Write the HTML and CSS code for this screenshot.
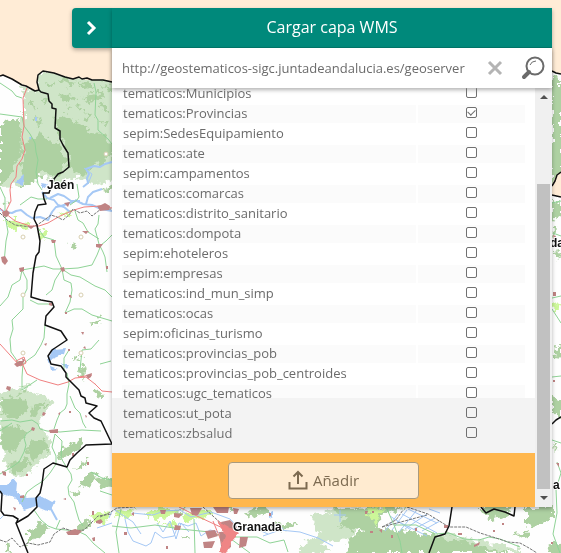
FILE: index.html
```html
<!DOCTYPE html>
<html lang="es">
<head>
<meta charset="utf-8">
<meta name="viewport" content="width=device-width, initial-scale=1">
<title>Cargar capa WMS</title>
<link rel="stylesheet" href="styles.css">
</head>
<body>
<svg class="map" viewBox="0 0 561 553" preserveAspectRatio="xMinYMin slice" aria-hidden="true">
  <defs>
    <filter id="rough" x="-5%" y="-5%" width="110%" height="110%">
      <feTurbulence type="fractalNoise" baseFrequency="0.16" numOctaves="3" seed="4"/>
      <feDisplacementMap in="SourceGraphic" scale="13" xChannelSelector="R" yChannelSelector="G"/>
    </filter>
    <filter id="wobble" x="-5%" y="-5%" width="110%" height="110%">
      <feTurbulence type="fractalNoise" baseFrequency="0.15" numOctaves="2" seed="9"/>
      <feDisplacementMap in="SourceGraphic" scale="4" xChannelSelector="R" yChannelSelector="G"/>
    </filter>
  </defs>
  <rect class="land" width="561" height="553"/>
  <!-- vegetation -->
  <g class="wood-light" filter="url(#rough)">
    <path d="M20 84L35 92L38 72L58 72L120 80V178L92 183L72 176L56 184L38 172L22 186L0 187V150L17 134L24 118L24 98Z"/>
    <path d="M0 394L10 390L26 386L40 396L55 402L44 414L38 424L52 442L49 455L36 466L24 478L8 471L3 450L0 440Z"/>
    <path d="M312 516L335 510L355 512L358 528L350 540L320 542L330 552L295 553L318 534Z"/>
    <path d="M424 536L452 534L480 541L520 549V553H420Z"/>
    <path d="M552 120L561 130V170L552 175Z"/>
  </g>
  <g class="wood" filter="url(#rough)">
    <path d="M0 124L20 118L22 150L10 176L0 186Z"/>
    <path d="M27 140L42 134L58 145L66 160L58 178L42 172L33 184L21 186L22 160Z"/>
    <path d="M55 118L64 115L80 124L90 133L104 134L112 142V158L96 164L84 176L70 168L68 150L60 138Z"/>
    <path d="M57 81L66 78L76 83L70 87ZM78 84L91 83L93 88L84 89ZM60 97L71 93L77 101L65 103ZM82 97L98 92L103 98L90 102ZM64 107L72 108L69 112ZM98 106L110 104L110 112L101 110ZM48 97L42 99L44 105ZM101 84L111 86L108 92ZM31 101L36 99L33 108ZM45 81L53 83L50 88ZM84 112L92 115L88 120ZM100 120L110 121L108 127ZM36 118L42 121L38 127ZM76 106L82 107L80 111Z"/>
    <path d="M0 401L12 396L25 400L28 409L16 420L4 415ZM31 406L47 402L41 411L30 416ZM2 429L18 424L27 433L18 448L6 452L0 444ZM29 442L46 438L48 449L34 460L26 453ZM8 465L23 458L31 463L17 474ZM21 387L27 391L18 395Z"/>
    <path d="M58 453L70 444L84 438L83 445L71 455L60 458ZM73 470L84 460L91 457L83 468ZM78 482L94 473L100 477L82 488ZM28 531L42 522L48 528L40 537L28 544ZM72 535L84 518L91 521L79 535ZM94 388L104 393L100 398Z"/>
    <path d="M80 368L86 366L83 382ZM97 480L112 477V488L100 487ZM70 494L80 490L78 497Z"/>
    <path d="M338 507L408 506L386 514L375 526L400 531L426 534L455 540L510 553H345L350 538L365 531L340 526L346 517L334 513ZM245 513L265 506L272 512L249 518ZM268 525L298 522L291 529L266 530ZM222 507L235 507L230 512Z"/>
    <path d="M479 507H512L505 517L490 520ZM526 507H554V516L535 527L526 522ZM515 534L528 530L526 538ZM548 547L561 540V553H546Z"/>
    <path d="M552 74L561 78V172L552 184ZM552 202L561 199V214L552 220ZM553 225L557 231L552 242ZM556 250L561 249L557 262ZM557 344L561 345V359L555 358ZM552 396L561 400V418L552 414ZM553 440L558 445L555 453Z"/>
    <path d="M4 202L10 199L9 205ZM68 245L77 242L74 250ZM103 190L112 185V193ZM75 356L81 357L78 362ZM3 543L11 546L8 552ZM91 322L100 318L98 327Z"/>
    <path d="M182 535L191 535L190 541ZM173 508L185 510L174 515Z"/>
  </g>
  <g class="meadow" filter="url(#rough)">
    <path d="M5 220L24 222L30 227L12 230ZM58 215L72 211L70 216ZM38 228L47 235L43 240ZM92 516L103 511L112 514L105 522L94 524Z"/>
    <path d="M112 512L135 509L124 519ZM145 513L163 507L178 511L154 521ZM181 514L205 508L215 514L187 522ZM160 525L174 521L178 527ZM365 509L386 507L375 524L371 516ZM552 302L561 307L553 313Z"/>
  </g>
  <!-- water -->
  <g class="lake" filter="url(#wobble)">
    <path d="M0 485L7 485L13 478L17 483L16 493L27 498L43 497L54 503L50 512L36 506L24 510L15 498L0 493Z"/>
    <path d="M16 182L24 175L23 185ZM40 183L48 184L43 190ZM53 349L66 348L64 354L52 359L50 366L58 369L51 370L48 358ZM29 137h3l-2 3ZM35 118h3v3h-3ZM269 512l4-1v6l-4 2ZM270 525L284 527L278 531ZM61 364l8 0l-3 5Z"/>
  </g>
  <g class="river">
    <path class="wide" d="M43 505L51 509L57 520M48 507L55 501M0 209L5 212L12 213L16 211L21 210L27 215L32 218L40 217L48 220L52 212L56 207L61 206L67 204L75 201M42 192L47 198L54 200L58 205L64 207L70 212M75 200L83 204L92 205L101 209L112 211M86 204L88 197L93 192L102 189M83 187L88 183L87 178L89 174L86 169L94 166L100 167L105 164L112 162M50 198L58 194L64 196L71 201L80 201"/>
    <path d="M84 168L92 174L88 184M97 528L112 523M125 519L128 532L133 541L146 546L151 543L155 532L163 538L174 536L179 523L188 526L196 523L201 536L210 530L218 532L229 540M132 513L153 515L164 511L180 510L191 517L211 512L230 519L240 530L252 527L268 534M157 523L163 532L170 521L176 539L181 523L189 532M115 510L133 522L141 534M263 536L280 530L300 532L318 538L333 546M340 510v12M334 515h12M0 519L4 515M109 518L112 511"/>
    <path d="M385 531L398 514M392 530L407 510M399 532L416 511M405 529L427 514M414 529L435 518M422 531L440 521M402 514L437 533M397 521L427 536M408 509L437 523M429 509L440 513M390 516L411 530"/>
  </g>
  <!-- roads -->
  <g class="road">
    <path d="M0 83L12 91L16 96L22 98M0 114L22 117L24 126L30 134L35 143L36 152L38 160L36 172L38 184L42 190M94 83L96 92L95 115L98 120L98 130L108 139L112 144M0 187L5 198L5 215L8 232L6 241L4 263M38 228L44 237L54 240L56 256L62 269L78 268L92 265L97 255L101 245L106 241L112 235M22 270L44 266L53 269L62 269L71 275L80 277L95 286L105 290L112 297M22 270L20 280L12 285L8 297L0 306M22 270L27 280L27 289L23 297L23 309L12 320L13 329L10 339L11 352L18 362M62 269L64 280L71 283L72 290L70 302L65 313L74 309L82 309L92 315L112 321M30 300L38 304L48 304L53 305M45 325L44 338L41 345L35 355L28 360L21 366M62 269L55 280L52 290L46 295M75 211L78 220L83 223L88 232L99 239M99 215L98 224L95 229L99 244L103 252L105 257L107 272M20 205L31 197L38 199L47 199M70 205L77 200L79 197L77 184M99 340L91 349L82 350L80 370"/>
    <path d="M0 421L12 420L20 422L32 420L38 424L40 429L47 431L60 432L82 430L101 431M54 429L57 420L60 413L65 409L67 404L67 394L69 384L67 373M70 396L75 408L80 413L83 423L86 428M33 429L26 434L24 438L26 445L24 452L19 462L12 467L0 474M55 434L52 447L56 456L56 464L50 473L43 481L35 486L27 492L22 502M55 434L62 441L61 458L67 468L71 474L72 480L68 487L69 495L74 502L76 510L79 520L83 526M23 363L22 377L22 390L31 384L37 380M34 510L41 520L48 526L56 529L60 520M56 529L77 531L86 535L94 544L105 553M112 480L102 478L91 472M112 495L100 491M64 371L64 358L69 350M100 364L111 361M0 431L12 423"/>
    <path d="M121 509L116 532L119 553M112 526L131 528L155 525L180 529L210 532M194 519L195 553M235 537L257 537L270 543L284 540L288 552M210 532L231 539L250 553M387 509L394 525L400 541L402 553M394 525L416 525L435 534L449 533L464 539L479 540L489 537L500 539L520 547M552 203L561 201M552 298L561 296M552 377L561 376M557 462L561 473L556 489L557 513L553 534L560 553M553 233L561 236M552 309L561 323M552 440L561 443"/>
  </g>
  <g class="motorway">
    <path d="M27 88L23 98L24 126L22 137L25 150L22 159L17 166L16 177L11 184L10 190L11 201L5 213L15 221L30 226L39 226L48 223L60 216L74 210L84 207L101 206L112 208M0 344L10 355L20 366L26 363L24 357L16 361L20 366M22 363L27 374L40 380L58 385L68 382L75 378L86 377L95 384L102 391L112 392M78 377L92 375M179 507L199 517L227 530L222 553M213 521L222 543M227 530L236 537M5 213L0 208"/>
  </g>
  <g class="rail">
    <path d="M0 213L7 220L15 225L31 227L37 225L43 221L51 215L57 217L63 220L69 215L73 209L80 213L87 211L92 216L101 209L112 209M0 540L6 542L12 538L20 547L28 543L38 545L50 542L54 534L63 528L72 531L84 530L91 523L98 516L112 514M100 517L109 513L117 508L135 507M203 507L214 517L224 526M382 527L396 520L403 510M382 527L427 515M407 507L428 514L449 527L466 527L480 533L496 538L508 542L520 543L529 548L537 553"/>
  </g>
  <!-- towns -->
  <g class="town">
    <path d="M1 257L5 256L8 261L5 265L2 262ZM19 268l5-1l0 4l-4 1ZM60 268l4-1l1 4l-3 1ZM51 240l5 0l-1 3l-3 0ZM27 226l8 0l-4 3ZM2 212l5-2l3 3l-3 4l-4-1ZM64 203l6-1l-2 5ZM97 206l4-1l4-2l5 3l-1 4l-9 1ZM82 231l7 0l-3 3ZM96 244l7 0l-3 4l-4-1ZM106 266l2 0l0 3l-2 0ZM14 364l5-3l5 0l-2 4l-5 2ZM69 295l2 0l1 3l-3-1ZM49 303l4 0l-1 3l-3-1ZM65 312h2v2h-2ZM81 332l3 0l-1 3ZM44 344l3-1l-1 3ZM83 348l2-2l1 3ZM68 349h2v2h-2Z"/>
    <path d="M7 386l4 1l-1 4l-4-2ZM86 375l6-2l-1 4l-3 2ZM32 427l3 1l-1 3l-3-1ZM49 430l9-1l0 4l-8 0ZM22 358l3 2l-2 3ZM43 412l3 1l-2 3l-2-1ZM69 411h2v2h-2ZM2 471l4 1l0 4l-3-1ZM26 474h2v2h-2ZM66 532l9-3l7 2l-4 4l-10 0ZM20 496l4-1l0 3l-4 0ZM13 507l3 1l-1 3ZM87 462l2 0l0 3l-2 0ZM72 453h2v3h-2ZM96 521l5-2l2 3l-3 2l-4-1ZM92 538l3-1l0 4l-2 0ZM92 511h2v4h-2ZM63 499l3-1l0 2ZM85 415l2 1l-1 2ZM58 414l2-2l0 3Z"/>
    <path d="M131 514l3-2l0 4ZM160 510l6 0l-1 4l-4 0ZM174 513l8 1l-3 4l-5-1ZM190 508h12l-4 7h-6ZM213 507h16l-1 6h-11ZM233 508l6 1l-2 5l-3 0ZM175 525l6 1l-1 4l-6 0ZM205 531l10-1l3 6l-10 3ZM221 522l9-2l8 8l-6 8l-9-5ZM203 542l12-1l-3 7l-8 0ZM240 537l8 0l-2 9l-7 2ZM219 532h11l1 15l-9 6ZM124 532h3v3h-3ZM166 546h2v3h-2ZM269 513h2v3h-2ZM365 511l3 0l-1 3l-2 0ZM370 531h3v2h-3ZM379 530l3-1l0 4ZM391 535h2v3h-2ZM415 528h2v3h-2ZM458 533h4v2h-4ZM444 525h4v3h-4ZM474 545l6-3l-1 3l-5 2ZM493 530h2v2h-2ZM551 542h2v2h-2ZM553 235l3 1l-2 5ZM553 292l3 0l0 4l-3 0ZM556 463l3 0l0 4ZM553 380h2v2h-2ZM372 511h2v2h-2ZM502 523h2v2h-2Z"/>
  </g>
  <path class="city-core" filter="url(#wobble)" d="M217 520L229 527L239 533L233 540L226 553L219 552L225 536Z"/>
  <!-- area outside the region and the boundaries -->
  <path class="outside" d="M0 0H561V74L552 72L112 82L103 79L88 80L80 78L74 79L54 73L43 71L38 74L37 82L39 90L35 91L22 84L5 76H0ZM561 172L557 174L552 184V195L561 197Z"/>
  <g class="boundary">
    <path class="coast" d="M0 76L3 75L12 79L22 85L26 86L35 91L39 90L37 82L38 75L43 71L54 73L65 77L73 79L79 77L82 79L87 78L92 80L103 80L112 82M552 71L556 73L561 74M561 172L557 175L555 181L552 186M552 195L561 197"/>
    <path d="M39 90L41 92L48 94L49 101L52 104L52 108L56 109L55 128L60 131L60 139L63 145L68 153L69 167L63 172L58 174L54 179L52 184L49 193L43 193L44 199L46 204L38 205L35 212L34 219L37 225L40 241L39 252L36 256L33 273L31 297L41 300L52 302L54 307L46 316L45 325L61 331L67 340L52 350L48 356L51 364L61 366L66 373L66 377L79 390L81 396L85 398L86 403L97 406L89 413L94 418L101 421L112 444L86 445L77 453L70 460L67 467L53 463L44 469L42 484L40 493L36 498L37 507L28 516L16 523L28 553M0 491L2 494L1 511L4 515L13 516L18 519L16 524M452 507L449 526L445 534L435 537L429 553M481 507L486 513L494 509L505 512L514 516L515 507M552 424L556 420L561 417"/>
  </g>
  <g class="village"><circle cx="23" cy="237" r="2"/><circle cx="81" cy="237" r="2"/><circle cx="23" cy="295" r="2"/><circle cx="81" cy="295" r="2"/><circle cx="23" cy="353" r="2"/><circle cx="81" cy="353" r="2"/><circle cx="106" cy="154" r="2"/></g>
  <g class="city">
    <text x="47" y="189">Jaén</text>
    <text x="233" y="531">Granada</text>
    <text x="550" y="247">da</text>
    <text x="553" y="489">a</text>
  </g>
</svg>

<main class="stage">
  <button class="toggle" type="button" aria-label="Plegar panel">
    <svg viewBox="0 0 16 16" aria-hidden="true"><path d="M4 2L10 8L4 14"/></svg>
  </button>
  <section class="panel">
    <h1 class="title">Cargar capa WMS</h1>
    <form class="search">
      <input class="url" type="text" aria-label="URL del servicio" value="http://geostematicos-sigc.juntadeandalucia.es/geoserver">
      <button class="icon-button" type="button" aria-label="Borrar">
        <svg class="clear" viewBox="0 0 16 16" aria-hidden="true"><path d="M2 2L14 14M14 2L2 14"/></svg>
      </button>
      <button class="icon-button" type="button" aria-label="Buscar">
        <svg class="lens" viewBox="0 0 24 24" aria-hidden="true"><circle cx="14" cy="10" r="8.500"/><path class="glint" d="M9 9Q10.500 5 15 5"/><path class="handle" d="M8 16L3 21"/></svg>
      </button>
    </form>
    <div class="results">
      <div class="content">
        <div class="layers">
          <table>
            <tbody>
              <tr><td><label for="l1">tematicos:Municipios</label></td><td><input type="checkbox" id="l1"></td></tr>
              <tr><td><label for="l2">tematicos:Provincias</label></td><td><input type="checkbox" id="l2" checked></td></tr>
              <tr><td><label for="l3">sepim:SedesEquipamiento</label></td><td><input type="checkbox" id="l3"></td></tr>
              <tr><td><label for="l4">tematicos:ate</label></td><td><input type="checkbox" id="l4"></td></tr>
              <tr><td><label for="l5">sepim:campamentos</label></td><td><input type="checkbox" id="l5"></td></tr>
              <tr><td><label for="l6">tematicos:comarcas</label></td><td><input type="checkbox" id="l6"></td></tr>
              <tr><td><label for="l7">tematicos:distrito_sanitario</label></td><td><input type="checkbox" id="l7"></td></tr>
              <tr><td><label for="l8">tematicos:dompota</label></td><td><input type="checkbox" id="l8"></td></tr>
              <tr><td><label for="l9">sepim:ehoteleros</label></td><td><input type="checkbox" id="l9"></td></tr>
              <tr><td><label for="l10">sepim:empresas</label></td><td><input type="checkbox" id="l10"></td></tr>
              <tr><td><label for="l11">tematicos:ind_mun_simp</label></td><td><input type="checkbox" id="l11"></td></tr>
              <tr><td><label for="l12">tematicos:ocas</label></td><td><input type="checkbox" id="l12"></td></tr>
              <tr><td><label for="l13">sepim:oficinas_turismo</label></td><td><input type="checkbox" id="l13"></td></tr>
              <tr><td><label for="l14">tematicos:provincias_pob</label></td><td><input type="checkbox" id="l14"></td></tr>
              <tr><td><label for="l15">tematicos:provincias_pob_centroides</label></td><td><input type="checkbox" id="l15"></td></tr>
              <tr><td><label for="l16">tematicos:ugc_tematicos</label></td><td><input type="checkbox" id="l16"></td></tr>
              <tr><td><label for="l17">tematicos:ut_pota</label></td><td><input type="checkbox" id="l17"></td></tr>
              <tr><td><label for="l18">tematicos:zbsalud</label></td><td><input type="checkbox" id="l18"></td></tr>
            </tbody>
          </table>
        </div>
        <div class="actions">
          <button class="add" type="button">
            <svg viewBox="0 0 20 20" aria-hidden="true"><path d="M1.500 12V18.500H18.500V12M10 14V2M5.500 6.500L10 2L14.500 6.500"/></svg>
            Añadir
          </button>
        </div>
      </div>
      <div class="scrollbar" aria-hidden="true">
        <span class="arrow up"></span>
        <span class="track"></span>
        <span class="thumb"></span>
        <span class="arrow down"></span>
      </div>
    </div>
  </section>
</main>
</body>
</html>
```
FILE: styles.css
```css
* { box-sizing: border-box; }

body {
  margin: 0;
  overflow: hidden;
  color: #6b6b6b;
  font-family: "Open Sans", "Noto Sans", sans-serif;
  font-size: 13px;
}

button, input { font: inherit; color: inherit; }
button { padding: 0; border: 0; background: none; cursor: pointer; }
svg { display: block; fill: none; }

/* Map */
.map { position: absolute; inset: 0; width: 100%; height: 100%; }
.land { fill: #fefefe; }
.outside { fill: #ffecd6; }
.wood-light { fill: #cfe5c8; }
.wood { fill: #aed1a2; }
.meadow { fill: #ccf799; }
.lake { fill: #a5c8f5; }
.river { stroke: #a5c8f5; stroke-width: 1; }
.river .wide { stroke-width: 2px; stroke-linejoin: round; }
.road { stroke: #8fd396; stroke-width: 1; }
.motorway { stroke: #f08080; stroke-width: 1; }
.rail { stroke: #777; stroke-width: 1; stroke-dasharray: 3 1; }
.town { fill: #c08484; }
.city-core { fill: #ef8585; }
.boundary { stroke: #111; stroke-width: 1.5px; stroke-linejoin: round; }
.village { fill: #fff; stroke: #d8ceb0; }
.city {
  fill: #111;
  stroke: #fff;
  stroke-width: 2px;
  paint-order: stroke;
  font-family: "Liberation Sans", sans-serif;
  font-size: 12px;
  font-weight: 700;
}

/* Panel */
.stage {
  position: relative;
  display: flex;
  align-items: flex-start;
  height: 100vh;
  padding: 8px 9px 46px 72px;
}

.toggle {
  display: grid;
  place-items: center;
  width: 40px;
  height: 40px;
  border-radius: 4px 0 0 4px;
  background: #00897b;
  box-shadow: 0 2px 4px rgba(0, 0, 0, .3);
}
.toggle svg { width: 16px; height: 16px; stroke: #fff; stroke-width: 3px; }

.panel {
  display: flex;
  flex: 1;
  flex-direction: column;
  min-width: 0;
  height: 100%;
  background: #fff;
  box-shadow: 0 2px 4px rgba(0, 0, 0, .3);
}

.title {
  flex: none;
  height: 40px;
  margin: 0;
  border-bottom: 1px solid #00796b;
  background: #00897b;
  color: #fff;
  font-size: 16px;
  font-weight: 400;
  line-height: 38px;
  text-align: center;
}

.search {
  position: relative;
  display: flex;
  flex: none;
  align-items: center;
  height: 40px;
  padding-left: 10px;
  box-shadow: 0 2px 4px rgba(0, 0, 0, .3);
}
.url {
  flex: 1;
  min-width: 0;
  height: 32px;
  margin-right: 8px;
  padding: 0;
  border: 0;
  outline: 0;
  background: none;
}
.icon-button { display: grid; place-items: center; width: 38px; height: 40px; }
.clear { width: 16px; height: 16px; stroke: #b4b4b4; stroke-width: 3px; }
.lens { width: 24px; height: 24px; stroke: #6b6b6b; stroke-width: 2px; }
.lens .glint { stroke-width: 1px; }
.lens .handle { stroke-width: 4px; stroke-linecap: round; }

.results { display: flex; flex: 1; min-height: 0; }
.content { display: flex; flex: 1; flex-direction: column; min-width: 0; }

/* The list is scrolled to its end */
.layers {
  display: flex;
  flex: 1;
  flex-direction: column;
  justify-content: flex-end;
  min-height: 0;
  overflow: hidden;
  padding: 0 8px 8px;
  background: linear-gradient(#f3f3f3, #f3f3f3) bottom / 100% 55px no-repeat #fff;
}
table { width: 100%; border-spacing: 2px; table-layout: fixed; }
td { height: 18px; padding: 0 1px 2px; line-height: 16px; mix-blend-mode: darken; }
td:last-child { width: 107px; text-align: center; }
tr:nth-child(even) td { background: #fbfbfb; }
label { display: block; white-space: nowrap; }

input[type="checkbox"] {
  appearance: none;
  display: grid;
  place-items: center;
  width: 11px;
  height: 11px;
  margin: 0 auto 2px;
  border: 1px solid #707070;
  border-radius: 2px;
  background: #fff;
}
input[type="checkbox"]:checked::before {
  content: "";
  width: 6px;
  height: 4px;
  margin-bottom: 2px;
  border: solid #707070;
  border-width: 0 0 1px 1px;
  transform: rotate(-45deg);
}

.actions {
  display: grid;
  flex: none;
  place-items: center;
  height: 54px;
  background: #ffb74d;
}
.add {
  display: flex;
  align-items: center;
  justify-content: center;
  gap: 5px;
  width: 45%;
  height: 37px;
  border: 1px solid #ab9a7c;
  border-radius: 4px;
  background: #ffebd0;
  color: #7c6a50;
  font-size: 15px;
}
.add svg { width: 20px; height: 20px; stroke: #7c6a50; stroke-width: 2px; }

.scrollbar {
  display: flex;
  flex: none;
  flex-direction: column;
  align-items: center;
  width: 17px;
  background: #f0f0f0;
}
.arrow { display: grid; place-items: center; height: 18px; }
.arrow::before { content: ""; border: 4px solid transparent; }
.up::before { border-top: 0; border-bottom-color: #505050; }
.down::before { border-bottom: 0; border-top-color: #505050; }
.track { flex: 78; }
.thumb { flex: 304; width: 13px; background: #c1c1c1; }
```
